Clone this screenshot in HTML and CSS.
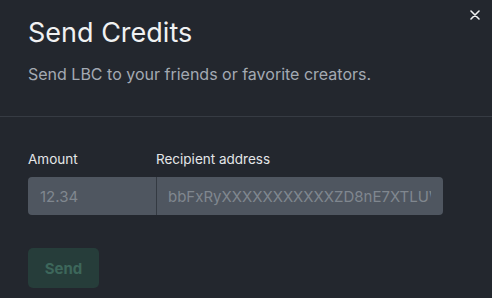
FILE: index.html
```html
<!DOCTYPE html>
<html>
<head>
<meta charset="utf-8">
<link rel="stylesheet" href="styles.css">
</head>
<body>
<div class="modal">
  <button class="close" aria-label="Close">
    <svg width="10" height="10" viewBox="0 0 10 10"><path d="M1 1L9 9M9 1L1 9" stroke="#f0f0f0" stroke-width="1.6" stroke-linecap="round"/></svg>
  </button>
  <header class="head">
    <h1 class="title">Send Credits</h1>
    <p class="subtitle">Send LBC to your friends or favorite creators.</p>
  </header>
  <section class="body">
    <div class="fields">
      <label class="field amount">
        <span class="label">Amount</span>
        <input class="input input-left" value="12.34" disabled>
      </label>
      <label class="field recipient">
        <span class="label">Recipient address</span>
        <input class="input input-right" value="bbFxRyXXXXXXXXXXXZD8nE7XTLUWYKBRrkPxAy" disabled>
      </label>
    </div>
    <button class="send" disabled>Send</button>
  </section>
</div>
</body>
</html>
```
FILE: styles.css
```css
* { box-sizing: border-box; }
html, body { margin: 0; padding: 0; }
body {
  width: 492px;
  height: 298px;
  background: #23272e;
  font-family: Inter, "Noto Sans", sans-serif;
  overflow: hidden;
}
.modal {
  position: relative;
  height: 298px;
}
.close {
  position: absolute;
  top: 10px;
  right: 12px;
  width: 10px;
  height: 10px;
  padding: 0;
  border: 0;
  background: none;
  display: flex;
}
.head {
  padding: 16px 28px 0;
  height: 117px;
  border-bottom: 1px solid #363b43;
}
.title {
  margin: 0;
  font-size: 27px;
  line-height: 33px;
  font-weight: 400;
  color: #f0f1f2;
}
.subtitle {
  margin: 15px 0 0;
  font-size: 16px;
  line-height: 20px;
  color: #a3aab3;
}
.body {
  padding: 33px 28px 0;
}
.fields {
  display: flex;
  width: 415px;
}
.field {
  display: flex;
  flex-direction: column;
}
.amount { width: 128px; }
.recipient { flex: 1; }
.label {
  font-size: 13.5px;
  line-height: 18px;
  color: #e4e6e8;
  margin-bottom: 9px;
}
.input {
  height: 38px;
  width: 100%;
  border: 0;
  background: #4f5660;
  color: #80878f;
  font-family: Inter, "Noto Sans", sans-serif;
  font-size: 15px;
  padding: 0 12px;
  outline: none;
}
.input-left {
  border-radius: 4px 0 0 4px;
}
.input-right {
  border-radius: 0 4px 4px 0;
  border-left: 1px solid #343a42;
  padding-left: 11px;
}
.send {
  margin-top: 33px;
  width: 71px;
  height: 40px;
  border: 0;
  border-radius: 5px;
  background: #263d3a;
  color: #3d675b;
  font-family: Inter, "Noto Sans", sans-serif;
  font-weight: 700;
  font-size: 15px;
  padding: 0;
}
```
